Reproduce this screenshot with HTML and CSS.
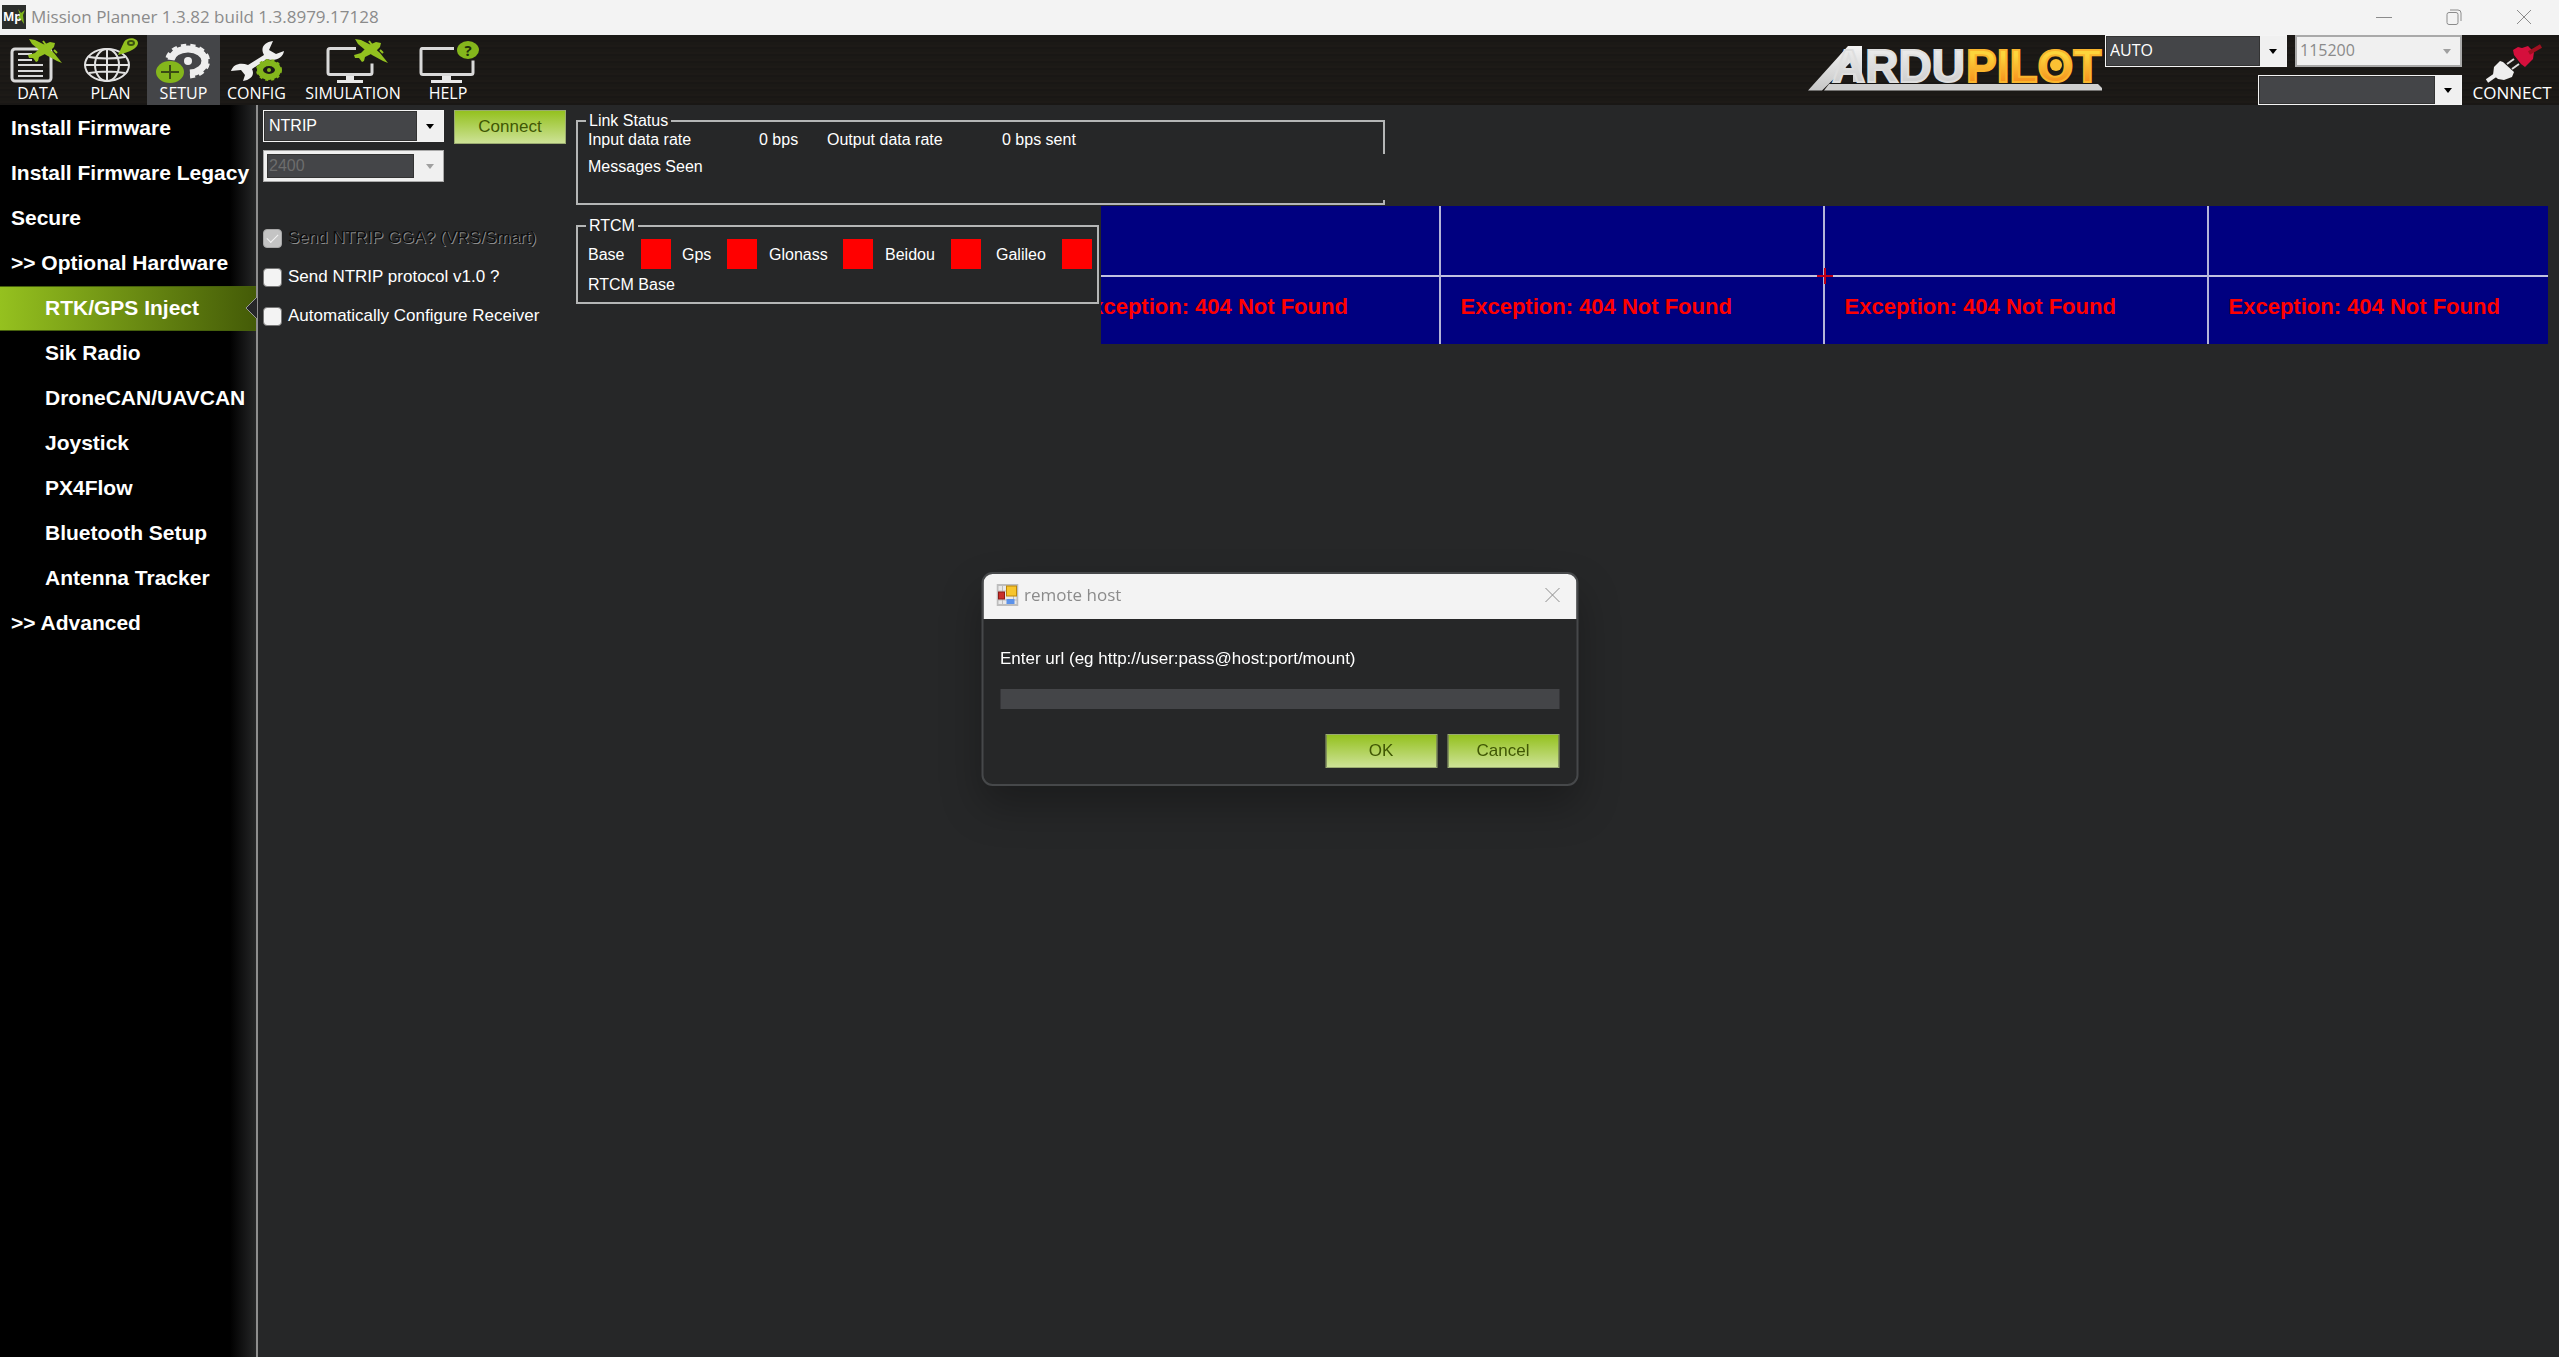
FILE: index.html
```html
<!DOCTYPE html>
<html lang="en">
<head>
<meta charset="utf-8">
<title>Mission Planner 1.3.82 build 1.3.8979.17128</title>
<link rel="stylesheet" href="styles.css">
</head>
<body>
<svg class="defs" width="0" height="0" aria-hidden="true">
  <defs>
    <g id="plane" fill="#93c11f">
      <path d="M0 0L6 1L16 6L25 14L33 24L28 22L17 16L9 10L3 5Z"/>
      <path d="M26 4L21 3L14 6L6 14L-1 16L0 19L4 19L7 23L9 22L10 18L20 13L25 8Z"/>
      <path d="M14 2l3 4M25 11l3 3" stroke="#93c11f" stroke-width="2"/>
    </g>
  </defs>
</svg>

<header class="titlebar">
  <svg class="app-icon" viewBox="0 0 24 24" aria-hidden="true">
    <rect width="24" height="24" fill="#2c2e2c"/>
    <text x="1" y="16" class="app-icon-text">Mp</text>
    <path d="M16 4l3 4 4-3-2 5 1 9-4-6-3 1 3-4z" fill="#7fb51c"/>
  </svg>
  <h1 class="titlebar-text">Mission Planner 1.3.82 build 1.3.8979.17128</h1>
  <div class="window-buttons">
    <button type="button" aria-label="Minimize"><svg viewBox="0 0 16 16"><path d="M0 8.500h16"/></svg></button>
    <button type="button" aria-label="Restore"><svg viewBox="0 0 16 16"><rect x="1" y="3.500" width="11" height="12" rx="2"/><path d="M4 1h8a3 3 0 0 1 3 3v8"/></svg></button>
    <button type="button" aria-label="Close"><svg viewBox="0 0 16 16"><path d="M1 1l14 14M15 1L1 15"/></svg></button>
  </div>
</header>

<div class="toolbar">
  <nav class="tools">
    <button type="button" class="tool">
      <svg viewBox="1 37 73 46" width="73" height="46">
        <rect x="12" y="49" width="39" height="32" rx="3" fill="none" stroke="#d9d9d9" stroke-width="3"/>
        <path d="M18 54h14M18 60h14M18 65h25M18 71h25M18 76h25" stroke="#d9d9d9" stroke-width="2"/>
        <use href="#plane" x="29" y="39"/>
      </svg>
      <span>DATA</span>
    </button>
    <button type="button" class="tool">
      <svg viewBox="74 37 73 46" width="73" height="46">
        <g fill="none" stroke="#e2e2e2" stroke-width="2">
          <ellipse cx="107" cy="65" rx="22" ry="16"/><ellipse cx="107" cy="65" rx="12" ry="16"/>
          <path d="M107 49v32M85 65h44M89 57q18 3 36 0M89 73q18-3 36 0"/>
        </g>
        <path d="M118 55L124 42C127 37 137 37 138 43C138 48 130 52 118 55Z" fill="#93c11f"/>
        <ellipse cx="131" cy="43" rx="3" ry="2" fill="none" stroke="#3c5210" stroke-width="2"/>
      </svg>
      <span>PLAN</span>
    </button>
    <button type="button" class="tool tool-active">
      <svg viewBox="147 37 73 46" width="73" height="46">
        <path d="M171 60A17 12 0 1 1 190 73" fill="none" stroke="#eee" stroke-width="7"/>
        <path d="M168 58A20 15 0 1 1 190 76" fill="none" stroke="#eee" stroke-width="5" stroke-dasharray="5 4"/>
        <circle cx="188" cy="61" r="4" fill="#eee"/>
        <ellipse cx="170" cy="72" rx="14" ry="11" fill="#84b61c"/>
        <path d="M161 72h18M170 65v14" stroke="#3a4b14" stroke-width="2"/>
      </svg>
      <span>SETUP</span>
    </button>
    <button type="button" class="tool">
      <svg viewBox="220 37 73 46" width="73" height="46">
        <path d="M273 41C264 42 260 48 264 55L248 65C241 62 233 64 231 71L241 70L245 75L243 81C251 80 255 75 252 69L267 59C275 62 283 58 284 51L276 54L269 50Z" fill="#eee"/>
        <ellipse cx="269" cy="70" rx="9" ry="7" fill="none" stroke="#84b61c" stroke-width="6"/>
        <ellipse cx="269" cy="70" rx="12" ry="10" fill="none" stroke="#84b61c" stroke-width="2" stroke-dasharray="3 3"/>
        <circle cx="269" cy="70" r="2" fill="#84b61c"/>
      </svg>
      <span>CONFIG</span>
    </button>
    <button type="button" class="tool tool-wide">
      <svg viewBox="293 37 120 46" width="120" height="46">
        <path d="M356 48.500h-26q-2 0-2 2v22q0 2 2 2h40q2 0 2-2v-9" fill="none" stroke="#d9d9d9" stroke-width="3"/>
        <path d="M346 76h8v4h9v3h-26v-3h9z" fill="#e8e8e8"/>
        <use href="#plane" x="355" y="39"/>
      </svg>
      <span>SIMULATION</span>
    </button>
    <button type="button" class="tool tool-narrow">
      <svg viewBox="413 37 70 46" width="70" height="46">
        <path d="M454 48.500h-32q-1 0-1 2v22q0 2 2 2h48q2 0 2-2v-12" fill="none" stroke="#d9d9d9" stroke-width="3"/>
        <path d="M442 76h9v4h11v3h-31v-3h11z" fill="#e8e8e8"/>
        <ellipse cx="468" cy="50" rx="11" ry="9" fill="#84b61c"/>
        <text x="468" y="56" class="help-mark">?</text>
      </svg>
      <span>HELP</span>
    </button>
  </nav>

  <svg class="logo" viewBox="1807 45 296 47" width="296" height="47" role="img" aria-label="ArduPilot">
    <defs>
      <linearGradient id="silver" x1="0" y1="0" x2="0" y2="1"><stop offset="0" stop-color="#f4f4f4"/><stop offset="1" stop-color="#c6c6c6"/></linearGradient>
      <linearGradient id="gold" x1="0" y1="0" x2="0" y2="1"><stop offset=".3" stop-color="#fcd53c"/><stop offset=".8" stop-color="#f6921e"/></linearGradient>
    </defs>
    <path d="M1808 90.500L1848 46H1862V82H1853V60L1822 90.500Z" fill="url(#silver)"/>
    <path d="M1824 90.500L1829 84H2098L2102 88V90.500Z" fill="#cfcfcf"/>
    <text x="1832" y="82" class="logo-text" fill="url(#silver)" stroke="#dedede">ARDU</text>
    <text x="1966" y="82" class="logo-text" fill="url(#gold)" stroke="#f9b52d">PILOT</text>
    <circle cx="2056" cy="65" r="6" fill="#fbc133"/>
  </svg>

  <div class="ports">
    <span class="combo combo-port"><select aria-label="Port"><option>AUTO</option></select></span>
    <span class="combo combo-baud combo-off"><select aria-label="Baud rate" disabled><option>115200</option></select></span>
    <span class="combo combo-vehicle"><select aria-label="Vehicle"><option></option></select></span>
  </div>

  <button type="button" class="tool tool-connect">
    <svg viewBox="2466 37 92 46" width="92" height="46">
      <path d="M2487 81l10-7" stroke="#eee" stroke-width="4"/>
      <path d="M2494 67l6-6 3 1 11 10-2 5-8 3-6-1-5-4z" fill="#eee"/>
      <path d="M2507 64l7-5M2512 69l7-5" stroke="#ddd" stroke-width="2"/>
      <path d="M2513 50l5-3 4 1 6-2 6 6-1 7-8 8-4-3-7-9z" fill="#d50f3c"/>
      <path d="M2529 53l12-7" stroke="#a01020" stroke-width="4"/>
    </svg>
    <span>CONNECT</span>
  </button>
</div>

<div class="workspace">
  <nav class="sidebar">
    <a href="#firmware">Install Firmware</a>
    <a href="#legacy">Install Firmware Legacy</a>
    <a href="#secure">Secure</a>
    <a href="#optional">&gt;&gt; Optional Hardware</a>
    <a href="#rtk" class="sub current" aria-current="page">RTK/GPS Inject
      <svg class="notch" viewBox="0 0 12 22" width="12" height="22" aria-hidden="true"><path d="M12 0L1 11l11 11" fill="#262728" stroke="#999" stroke-width="1"/></svg>
    </a>
    <a href="#sik" class="sub">Sik Radio</a>
    <a href="#dronecan" class="sub">DroneCAN/UAVCAN</a>
    <a href="#joystick" class="sub">Joystick</a>
    <a href="#px4flow" class="sub">PX4Flow</a>
    <a href="#bluetooth" class="sub">Bluetooth Setup</a>
    <a href="#antenna" class="sub">Antenna Tracker</a>
    <a href="#advanced">&gt;&gt; Advanced</a>
  </nav>

  <main class="panel">
    <form class="source">
      <div class="source-pick">
        <div class="source-combos">
          <span class="combo"><select aria-label="Source"><option>NTRIP</option></select></span>
          <span class="combo combo-inset"><select aria-label="Source baud rate" disabled><option>2400</option></select></span>
        </div>
        <button type="button" class="btn">Connect</button>
      </div>
      <div class="checks">
        <label class="check check-off"><input type="checkbox" checked disabled><span>Send NTRIP GGA? (VRS/Smart)</span></label>
        <label class="check"><input type="checkbox"><span>Send NTRIP protocol v1.0 ?</span></label>
        <label class="check"><input type="checkbox"><span>Automatically Configure Receiver</span></label>
      </div>
    </form>

    <div class="status">
      <fieldset class="group link-status">
        <legend>Link Status</legend>
        <div class="rates">
          <span>Input data rate</span><span>0 bps</span><span>Output data rate</span><span>0 bps sent</span>
        </div>
        <div class="line">Messages Seen</div>
      </fieldset>
      <div class="status-row">
        <fieldset class="group rtcm">
          <legend>RTCM</legend>
          <div class="signals">
            <span>Base</span><i class="lamp"></i>
            <span>Gps</span><i class="lamp"></i>
            <span>Glonass</span><i class="lamp"></i>
            <span>Beidou</span><i class="lamp"></i>
            <span>Galileo</span><i class="lamp"></i>
          </div>
          <div class="line">RTCM Base</div>
        </fieldset>
        <section class="map" aria-label="Map">
          <div class="tile">Exception: 404 Not Found</div>
          <div class="tile">Exception: 404 Not Found</div>
          <div class="tile">Exception: 404 Not Found</div>
          <div class="tile">Exception: 404 Not Found</div>
          <svg class="crosshair" viewBox="0 0 16 16" width="16" height="16" aria-hidden="true"><path d="M0 8h16M8 0v16"/></svg>
        </section>
      </div>
    </div>
  </main>
</div>

<div class="dialog" role="dialog" aria-labelledby="dialog-title">
  <div class="dialog-title">
    <svg viewBox="0 0 22 22" width="22" height="22" aria-hidden="true">
      <rect x="1" y="1" width="20" height="20" fill="#e9e9e9" stroke="#bdbdbd" stroke-width="2"/>
      <path d="M1 7h9M1 16h20M6 1v20M17 12v9" stroke="#bdbdbd"/>
      <rect x="10" y="2" width="10" height="10" fill="#f7c52c" stroke="#bb8608" stroke-width="1"/>
      <rect x="2" y="8" width="6" height="7" fill="#c8302a" stroke="#8d1a17" stroke-width="1"/>
      <rect x="10" y="15" width="8" height="5" fill="#5b92ea"/>
    </svg>
    <h2 id="dialog-title">remote host</h2>
    <button type="button" aria-label="Close"><svg viewBox="0 0 16 16"><path d="M1 1l14 14M15 1L1 15"/></svg></button>
  </div>
  <form class="dialog-body">
    <label for="url">Enter url (eg http://user:pass@host:port/mount)</label>
    <input type="text" id="url">
    <div class="dialog-actions">
      <button type="button" class="btn">OK</button>
      <button type="button" class="btn">Cancel</button>
    </div>
  </form>
</div>
</body>
</html>
```
FILE: styles.css
```css
* { box-sizing: border-box; }

body {
  margin: 0;
  min-height: 100vh;
  display: flex;
  flex-direction: column;
  background: #262728;
  color: #fff;
  font: 17px/20px "Liberation Sans", Arial, sans-serif;
}

button, select, input { font: inherit; color: inherit; }
button { border: 0; padding: 0; background: none; }
.defs { position: absolute; }

/* Window title bar */
.titlebar {
  display: flex;
  align-items: center;
  height: 35px;
  padding: 0 0 2px 2px;
  background: #f3f3f3;
  color: #8b8b8b;
}
.app-icon { width: 24px; height: 24px; }
.app-icon-text { font: bold 12px "Open Sans", sans-serif; fill: #fff; }
.titlebar-text {
  margin: 0 auto 0 5px;
  font: 17px/24px "Open Sans", "Noto Sans", sans-serif;
}
.window-buttons { display: flex; }
.window-buttons button { display: flex; justify-content: center; align-items: center; width: 70px; height: 33px; }
.window-buttons svg, .dialog-title button svg {
  width: 16px;
  height: 16px;
  fill: none;
  stroke: #8b8b8b;
  stroke-width: 1;
}

/* Main toolbar */
.toolbar {
  display: flex;
  height: 70px;
  background: repeating-linear-gradient(#1b1916 0 3px, #1d1a17 3px 5px, #191715 5px 7px);
  font-family: "Open Sans", "Noto Sans", sans-serif;
}
.tools { display: flex; margin-right: auto; padding-left: 1px; }
.tool {
  display: flex;
  flex-direction: column;
  align-items: center;
  width: 73px;
  padding-top: 2px;
  font-size: 16px;
}
.tool svg { display: block; flex: none; }
.tool-active { background: #444548; }
.tool-wide { width: 120px; }
.tool-narrow { width: 70px; }
.tool-connect { width: 92px; margin-right: 1px; font-size: 17px; }
.help-mark { font: bold 15px "Open Sans", sans-serif; text-anchor: middle; fill: #20300a; }
.logo { margin: 10px 2px 0 0; overflow: visible; }
.logo-text { font: bold 46px "Liberation Sans", Arial, sans-serif; stroke-width: 2; }

.ports {
  display: grid;
  grid-template: 32px 30px / 182px 167px;
  gap: 8px;
  width: 361px;
  font-size: 16px;
}
.combo-vehicle { grid-column: 1 / 3; justify-self: end; width: 204px; }

/* Drop-down lists */
.combo {
  display: grid;
  height: 32px;
  border: 1px solid #f4f4f4;
  background: #f0f0f0;
  font-size: 16px;
}
.combo select {
  grid-area: 1 / 1;
  appearance: none;
  min-width: 0;
  margin-right: 26px;
  padding: 0 4px;
  border: 1px solid #333;
  border-radius: 0;
  background: #444548;
  color: #fff;
  opacity: 1;
}
.combo::after {
  content: "";
  grid-area: 1 / 1;
  place-self: center end;
  margin-right: 9px;
  border: 4px solid transparent;
  border-top: 5px solid #000;
  border-bottom: 0;
  pointer-events: none;
}
.toolbar .combo { height: auto; }
.toolbar .combo select { padding: 0 3px 3px; }
.combo-off { border: 2px solid #a9a9a9; }
.combo-off select { border: 0; background: #f0f0f0; color: #8a8a8a; }
.combo-off::after, .combo-inset::after { border-top-color: #a0a0a0; }
.combo-inset { padding: 3px; border-color: #a9a9a9; }
.combo-inset select { padding: 0 1px; color: #6d6d6d; }
.combo-inset::after { margin-right: 6px; }

/* Workspace */
.workspace { display: flex; flex: 1; }

.sidebar {
  flex: none;
  width: 258px;
  padding-top: 1px;
  border-right: 2px solid #8e8e8e;
  background: linear-gradient(to right, #000 230px, #262728 256px);
  font-size: 21px;
  font-weight: bold;
}
.sidebar a {
  display: flex;
  align-items: center;
  height: 45px;
  padding: 0 0 2px 11px;
  color: #fff;
  text-decoration: none;
  white-space: nowrap;
}
.sidebar .sub { padding-left: 45px; }
.sidebar .current {
  border: solid #46600c;
  border-width: 1px 0;
  background: linear-gradient(to right, #95c11f, #445b07);
}
.notch { margin: 0 -1px 0 auto; }

.panel {
  display: flex;
  align-items: flex-start;
  flex: 1;
  min-width: 0;
  padding: 5px 11px 0 5px;
}
.source { flex: none; width: 313px; }
.source-pick { display: flex; align-items: flex-start; gap: 10px; }
.source-combos { display: grid; gap: 8px; width: 181px; }
.btn {
  width: 112px;
  height: 34px;
  border: 1px solid #9aab70;
  background: linear-gradient(#94c11f, #cde296);
  color: #405704;
}

.checks { display: grid; gap: 19px; padding-top: 46px; }
.check { display: flex; align-items: center; gap: 6px; }
.check input {
  appearance: none;
  display: grid;
  width: 19px;
  height: 19px;
  margin: 0;
  border: 1px solid #777;
  border-radius: 4px;
  background: #f3f3f3;
}
.check input:disabled { background: #c4c4c4; border-color: #a8a8a8; }
.check input:checked::after {
  content: "";
  place-self: center;
  width: 10px;
  height: 5px;
  margin-bottom: 3px;
  border: solid #f3f3f3;
  border-width: 0 0 1px 1px;
  transform: rotate(-45deg);
}
.check-off span { color: #0c0c0c; text-shadow: 1px 1px #8c8c8c; }

/* Status boxes */
.status { flex: 1; min-width: 0; padding-top: 2px; font-size: 16px; }
.group {
  position: relative;
  min-width: 0;
  margin: 0;
  padding: 0 8px;
  border: 2px solid #b4b6b6;
}
.group legend { padding: 0 3px; line-height: 18px; }
.link-status { width: 809px; height: 93px; }
.link-status::after {
  content: "";
  position: absolute;
  top: 24px;
  right: -2px;
  width: 2px;
  height: 46px;
  background: #262728;
}
.rates { display: grid; grid-template-columns: 171px 68px 175px auto; padding-left: 2px; }
.link-status .line { padding: 7px 0 0 2px; }
.status-row { display: flex; align-items: flex-start; gap: 2px; padding-top: 1px; }
.rtcm { flex: none; width: 523px; height: 87px; margin-top: 11px; padding-right: 0; }
.signals {
  display: grid;
  grid-template-columns: 53px 41px 45px 42px 74px 42px 66px 45px 66px 30px;
  align-items: center;
  padding: 4px 0 0 2px;
}
.signals span { padding-top: 2px; }
.lamp { width: 30px; height: 30px; background: #f00; }
.rtcm .line { padding: 6px 0 0 2px; }

.map {
  position: relative;
  display: flex;
  justify-content: center;
  flex: 1;
  min-width: 0;
  height: 138px;
  overflow: hidden;
  background: #000080;
}
.tile {
  flex: none;
  width: 384px;
  padding: 89px 0 0 20px;
  border-right: 2px solid #b4b4d8;
  background: linear-gradient(#c0c0e0, #c0c0e0) 0 69px / 100% 2px no-repeat;
  color: #f00;
  font: bold 22px/24px "Liberation Sans", Arial, sans-serif;
}
.crosshair {
  position: absolute;
  top: 62px;
  left: calc(50% - 8px);
  fill: none;
  stroke: #c00018;
  stroke-width: 2;
}

/* Input dialog */
.dialog {
  position: fixed;
  top: 50%;
  left: 50%;
  transform: translate(-50%, -50%);
  width: 597px;
  border: 2px solid #46484a;
  border-radius: 11px;
  background: #262728;
  overflow: hidden;
  box-shadow: 0 20px 40px rgba(0, 0, 0, .28);
}
.dialog-title {
  display: flex;
  align-items: center;
  height: 45px;
  padding: 0 16px 2px 13px;
  background: #f3f3f3;
  color: #8b8b8b;
}
.dialog-title h2 { margin: 0 auto 0 6px; font: 17px/24px "Open Sans", "Noto Sans", sans-serif; }
.dialog-title button { display: flex; }
.dialog-body { padding: 30px 17px 16px; }
.dialog-body label { display: block; }
.dialog-body input {
  display: block;
  width: 100%;
  height: 20px;
  margin: 20px 0 25px;
  padding: 0 4px;
  border: 0;
  background: #444548;
}
.dialog-actions { display: flex; justify-content: flex-end; gap: 10px; }
```
